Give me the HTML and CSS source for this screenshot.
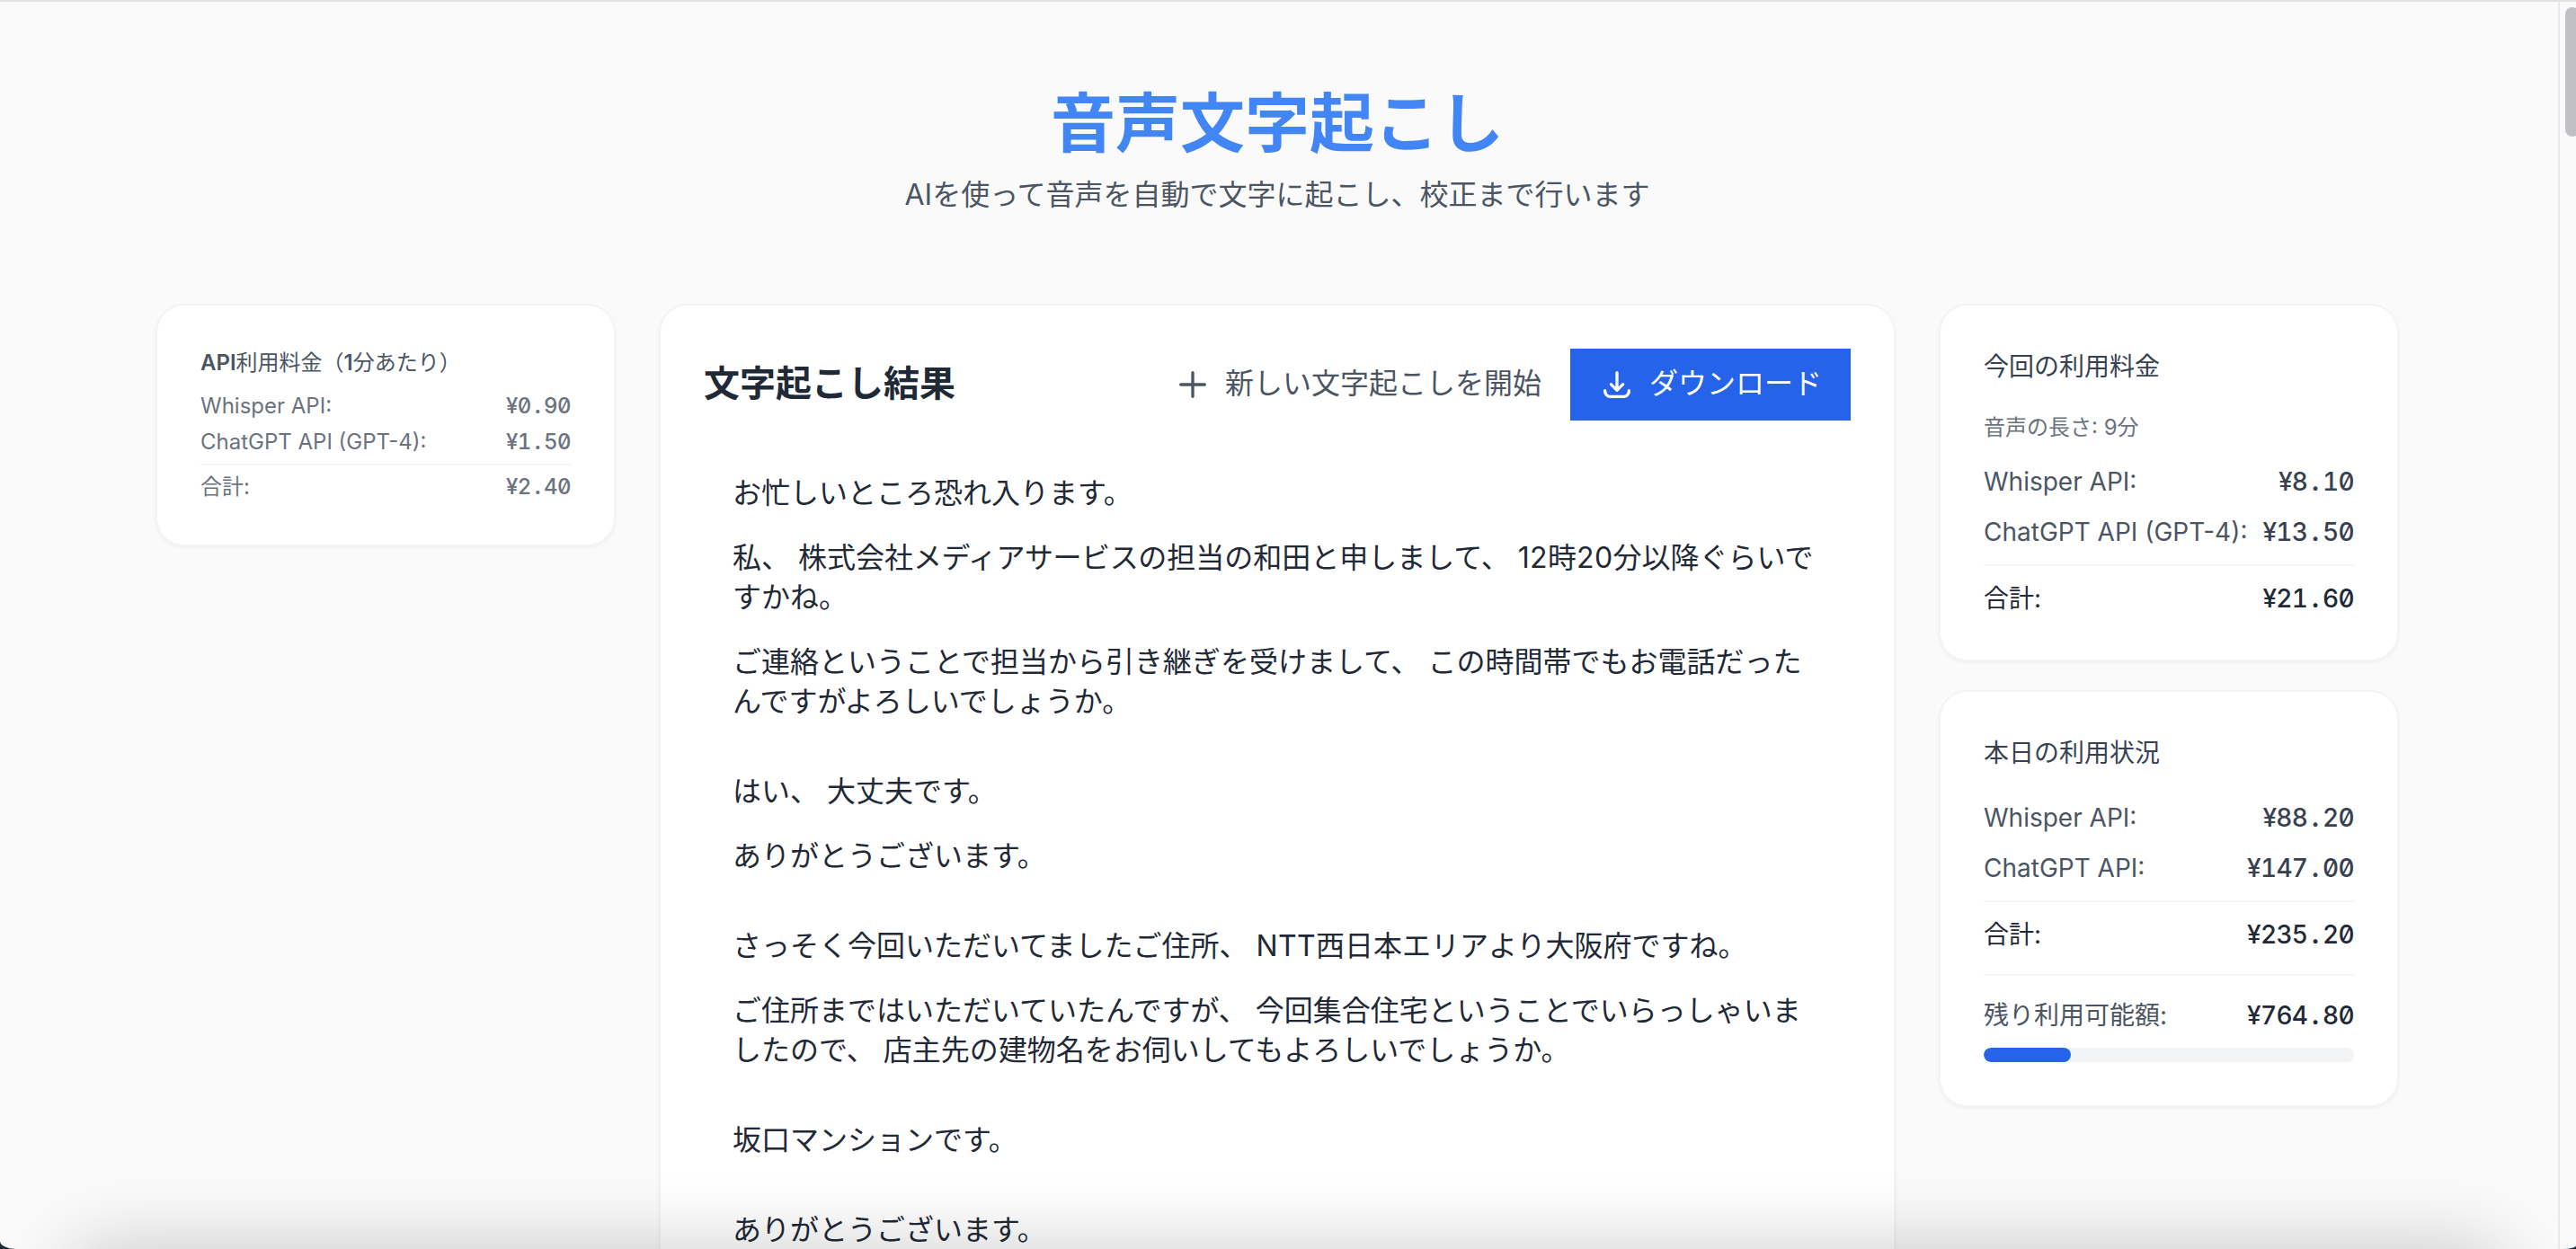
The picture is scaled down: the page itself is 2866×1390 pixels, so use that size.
FILE: index.html
```html
<!DOCTYPE html>
<html lang="ja">
<head>
<meta charset="utf-8">
<title>音声文字起こし</title>
<link rel="stylesheet" href="styles.css">
</head>
<body>
<div class="window">
  <div class="page">
    <header class="hero">
      <h1 class="hero-title">音声文字起こし</h1>
      <p class="hero-subtitle">AIを使って音声を自動で文字に起こし、校正まで行います</p>
    </header>
    <div class="columns">
      <aside class="side">
        <section class="card rates">
          <h2 class="rates-title"><b class="latin">API</b>利用料金（<b class="latin">1</b>分あたり）</h2>
          <div class="rates-row"><span>Whisper API:</span><span class="money">¥0<i class="dot">.</i>90</span></div>
          <div class="rates-row"><span>ChatGPT API (GPT-4):</span><span class="money">¥1<i class="dot">.</i>50</span></div>
          <div class="rates-row rates-total"><span>合計:</span><span class="money">¥2<i class="dot">.</i>40</span></div>
        </section>
      </aside>
      <main class="card result">
        <div class="result-head">
          <h2 class="result-title">文字起こし結果</h2>
          <div class="actions">
            <button class="btn btn-plain">
              <svg class="icon" viewBox="0 0 24 24"><path d="M12 4v16M4 12h16"/></svg>
              <span>新しい文字起こしを開始</span>
            </button>
            <button class="btn btn-primary">
              <svg class="icon" viewBox="0 0 24 24"><path d="M12 4v11.5M8 11.800l4 4 4-4M4 16v.5A3.500 3.500 0 0 0 7.500 20h9a3.500 3.500 0 0 0 3.500-3.500V16"/></svg>
              <span>ダウンロード</span>
            </button>
          </div>
        </div>
        <div class="transcript">
          <div class="turn">
            <p>お忙しいところ恐れ入ります。</p>
            <p>私、 株式会社<span class="tight">メディアサービス</span>の担当の和田と申しまして、 <span class="wide">12</span>時<span class="wide">20</span>分以降ぐらいで<br>すかね。</p>
            <p>ご連絡ということで担当から引き継ぎを受けまして、 この時間帯でもお電話だった<br>んですがよろしいでしょうか。</p>
          </div>
          <div class="turn">
            <p>はい、 大丈夫です。</p>
            <p>ありがとうございます。</p>
          </div>
          <div class="turn">
            <p>さっそく今回いただいてましたご住所、 <span class="wide">NTT</span>西日本エリアより大阪府ですね。</p>
            <p>ご住所まではいただいていたんですが、 今回集合住宅ということでいらっしゃいま<br>したので、 店主先の建物名をお伺いしてもよろしいでしょうか。</p>
          </div>
          <div class="turn">
            <p>坂口マンションです。</p>
          </div>
          <div class="turn">
            <p>ありがとうございます。</p>
          </div>
        </div>
      </main>
      <aside class="side">
        <section class="card usage">
          <h2 class="usage-title">今回の利用料金</h2>
          <p class="duration">音声の長さ: 9分</p>
          <div class="rows">
            <div class="row"><span>Whisper API:</span><span class="money">¥8<i class="dot">.</i>10</span></div>
            <div class="row"><span>ChatGPT API (GPT-4):</span><span class="money">¥13<i class="dot">.</i>50</span></div>
            <div class="row total"><span>合計:</span><span class="money">¥21<i class="dot">.</i>60</span></div>
          </div>
        </section>
        <section class="card usage">
          <h2 class="usage-title">本日の利用状況</h2>
          <div class="rows">
            <div class="row"><span>Whisper API:</span><span class="money">¥88<i class="dot">.</i>20</span></div>
            <div class="row"><span>ChatGPT API:</span><span class="money">¥147<i class="dot">.</i>00</span></div>
            <div class="row total"><span>合計:</span><span class="money">¥235<i class="dot">.</i>20</span></div>
          </div>
          <div class="remaining">
            <div class="row"><span>残り利用可能額:</span><span class="money strong">¥764<i class="dot">.</i>80</span></div>
            <div class="meter"><div class="meter-fill" style="width:23.52%"></div></div>
          </div>
        </section>
      </aside>
    </div>
  </div>
  <div class="scrollbar"><div class="thumb"></div></div>
  <div class="bottom-shade"></div>
</div>
</body>
</html>
```

FILE: styles.css
```css
* { box-sizing: border-box; margin: 0; padding: 0; }
html { background: #1f2937; }
body {
  font-family: Inter, "Noto Sans CJK JP", sans-serif;
  font-size: 32px;
  color: #1f2937;
  overflow: hidden;
}
.window {
  position: relative;
  display: flex;
  height: 1390px;
  overflow: hidden;
  border-top: 2px solid #e2e2e2;
  border-radius: 0 0 14px 17px / 0 0 4px 9px;
  background: #fafafa;
}
.page { flex: 1; padding: 95px 177px 0 173px; min-width: 0; }
.hero { text-align: center; margin-bottom: 97px; }
.hero-title { font-size: 72px; line-height: 80px; font-weight: 700; color: #4285f4; }
.hero-subtitle { margin-top: 16px; line-height: 48px; color: #4b5563; }
.columns { display: grid; grid-template-columns: 512px 1376px 512px; gap: 48px; align-items: start; }
.side { display: flex; flex-direction: column; gap: 32px; }
.card {
  background: #fff;
  border: 2px solid #f3f4f6;
  border-radius: 32px;
  padding: 48px;
  box-shadow: 0 2px 4px rgba(0, 0, 0, .04);
}
.money { font-feature-settings: "tnum", "zero"; font-weight: 500; letter-spacing: -.025em; white-space: nowrap; }
.dot { display: inline-block; width: .602em; text-align: center; font-style: normal; font-weight: 700; }

.rates { font-size: 24px; line-height: 32px; color: #6b7280; }
.rates-title { font-size: 24px; font-weight: 400; color: #4b5563; margin-bottom: 16px; }
.latin { font-weight: 600; }
.rates-row { display: flex; justify-content: space-between; }
.rates-row + .rates-row { margin-top: 8px; }
.rates-total { border-top: 2px solid #f3f4f6; padding-top: 8px; }

.result { height: 1300px; }
.result-head { display: flex; justify-content: space-between; align-items: center; height: 80px; }
.result-title { margin-top: -2px; font-size: 40px; line-height: 56px; font-weight: 700; }
.actions { display: flex; }
.btn {
  display: flex; align-items: center; gap: 16px;
  height: 80px; padding: 0 32px; border: 0;
  font: inherit; line-height: 48px; white-space: nowrap;
}
.btn span { margin-top: -2px; }
.btn-plain { background: transparent; color: #4b5563; }
.btn-primary { background: #2563eb; color: #fff; }
.icon {
  width: 40px; height: 40px; flex: none;
  fill: none; stroke: currentColor; stroke-width: 2;
  stroke-linecap: round; stroke-linejoin: round;
}

.transcript { padding: 59px 32px 0; line-height: 44px; white-space: nowrap; }
.turn + .turn { margin-top: 56px; }
.turn p + p { margin-top: 28px; }
.tight { letter-spacing: -.45px; }
.wide { letter-spacing: .4px; }

.usage { font-size: 28px; line-height: 40px; color: #4b5563; }
.usage-title { font-size: 28px; font-weight: 400; color: #374151; margin-bottom: 32px; }
.duration { font-size: 24px; line-height: 32px; color: #6b7280; margin-bottom: 24px; }
.rows { display: flex; flex-direction: column; gap: 16px; }
.row { display: flex; justify-content: space-between; white-space: nowrap; }
.row .money { color: #374151; }
.total { border-top: 2px solid #f3f4f6; padding-top: 16px; color: #1f2937; }
.total .money, .row .strong { color: #1f2937; font-weight: 550; }
.remaining { margin-top: 24px; border-top: 2px solid #f3f4f6; padding-top: 24px; }
.meter { margin-top: 16px; height: 16px; border-radius: 8px; background: #f3f4f6; overflow: hidden; }
.meter-fill { height: 100%; border-radius: 8px; background: #2563eb; }

.scrollbar { width: 20px; border-left: 2px solid #e8e8e8; padding: 6px 0 0 6px; overflow: hidden; }
.thumb { width: 16px; height: 144px; border-radius: 8px; background: #c1c1c5; }
.bottom-shade {
  position: absolute; left: 80px; right: 80px; bottom: -200px; height: 200px;
  border-radius: 30px;
  box-shadow: 0 0 86px rgba(0, 0, 0, .21);
  pointer-events: none;
}
```
